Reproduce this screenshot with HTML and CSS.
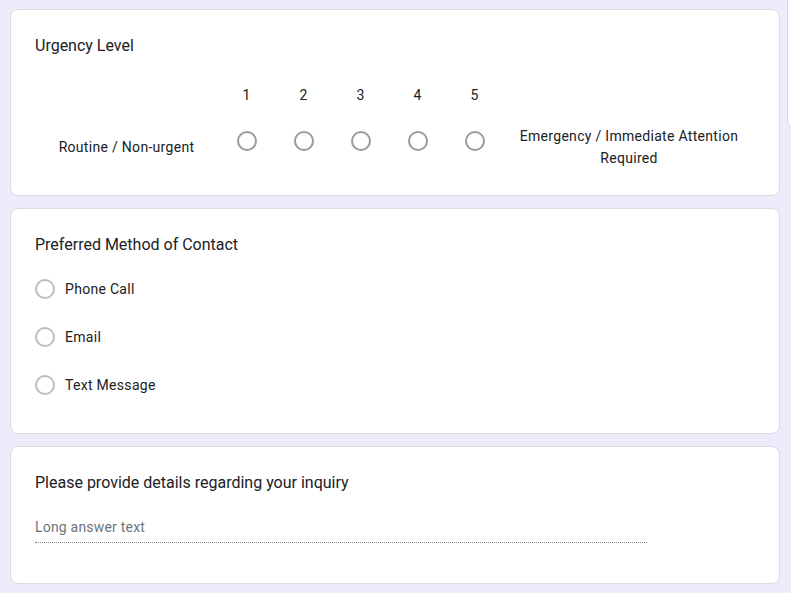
FILE: index.html
```html
<!DOCTYPE html>
<html lang="en">

<head>
    <meta charset="UTF-8">
    <meta name="viewport" content="width=device-width, initial-scale=1.0">
    <title>Inquiry Form</title>
    <link rel="stylesheet" href="styles.css">
</head>

<body>
    <div class="page">
        <div class="form-col">
            <!-- Linear scale question -->
            <div class="card">
                <div class="q-title">Urgency Level</div>
                <div class="scale">
                    <div class="scale-label scale-left">Routine / Non-urgent</div>
                    <div class="scale-col"><span class="scale-num">1</span><span class="scale-cell"><span class="radio dark"></span></span></div>
                    <div class="scale-col"><span class="scale-num">2</span><span class="scale-cell"><span class="radio dark"></span></span></div>
                    <div class="scale-col"><span class="scale-num">3</span><span class="scale-cell"><span class="radio dark"></span></span></div>
                    <div class="scale-col"><span class="scale-num">4</span><span class="scale-cell"><span class="radio dark"></span></span></div>
                    <div class="scale-col"><span class="scale-num">5</span><span class="scale-cell"><span class="radio dark"></span></span></div>
                    <div class="scale-label scale-right">Emergency / Immediate Attention Required</div>
                </div>
            </div>

            <!-- Multiple choice -->
            <div class="card">
                <div class="q-title">Preferred Method of Contact</div>
                <div class="options">
                    <label class="option"><span class="radio"></span>Phone Call</label>
                    <label class="option"><span class="radio"></span>Email</label>
                    <label class="option"><span class="radio"></span>Text Message</label>
                </div>
            </div>

            <!-- Paragraph -->
            <div class="card">
                <div class="q-title">Please provide details regarding your inquiry</div>
                <div class="long-answer">Long answer text</div>
            </div>
        </div>

        <div class="toolbar"></div>
    </div>
</body>

</html>
```

FILE: styles.css
```css
body, html {
    margin: 0;
    padding: 0;
    font-family: Roboto, Arial, sans-serif;
    background-color: #eeecfb;
    color: #202124;
    overflow: hidden;
}

.page {
    display: flex;
    align-items: flex-start;
    padding: 9px 0 0 10px;
}

.form-col {
    width: 770px;
    flex-shrink: 0;
    display: flex;
    flex-direction: column;
    gap: 12px;
}

.toolbar {
    flex-shrink: 0;
    width: 60px;
    height: 127px;
    margin: -9px 0 0 7px;
    background-color: #ffffff;
    border: 1px solid #dadce0;
    border-top: none;
    border-radius: 0 0 0 8px;
}

.card {
    background-color: #ffffff;
    border: 1px solid #dadce0;
    border-radius: 8px;
    padding: 24px 24px 24px;
}

.q-title {
    font-size: 16px;
    line-height: 24px;
}

/* Linear scale */
.scale {
    display: flex;
    align-items: flex-end;
    margin-top: 25px;
    font-size: 14px;
    letter-spacing: 0.3px;
}

.scale-col {
    width: 57px;
    display: flex;
    flex-direction: column;
    align-items: center;
    padding-bottom: 6px;
}

.scale-num {
    line-height: 24px;
    margin-bottom: 10px;
}

.scale-cell {
    height: 48px;
    display: flex;
    align-items: center;
    justify-content: center;
}

.scale-label {
    height: 48px;
    display: flex;
    align-items: center;
    justify-content: center;
    text-align: center;
    line-height: 22px;
}

.scale-left {
    width: 183px;
}

.scale-right {
    flex: 1;
    padding: 0 4px;
}

/* Radios */
.radio {
    display: inline-block;
    box-sizing: border-box;
    width: 20px;
    height: 20px;
    border: 2px solid #bdbdbd;
    border-radius: 50%;
    flex-shrink: 0;
}

.radio.dark {
    border-color: #9a9a9a;
}

.options {
    margin-top: 8px;
}

.option {
    display: flex;
    align-items: center;
    height: 48px;
    font-size: 14px;
    letter-spacing: 0.3px;
    gap: 10px;
}

/* Long answer */
.long-answer {
    width: 612px;
    margin-top: 22px;
    margin-bottom: 16px;
    padding-bottom: 5px;
    font-size: 14px;
    line-height: 20px;
    letter-spacing: 0.2px;
    color: #70757a;
    border-bottom: 1px dotted #80868b;
}
```
